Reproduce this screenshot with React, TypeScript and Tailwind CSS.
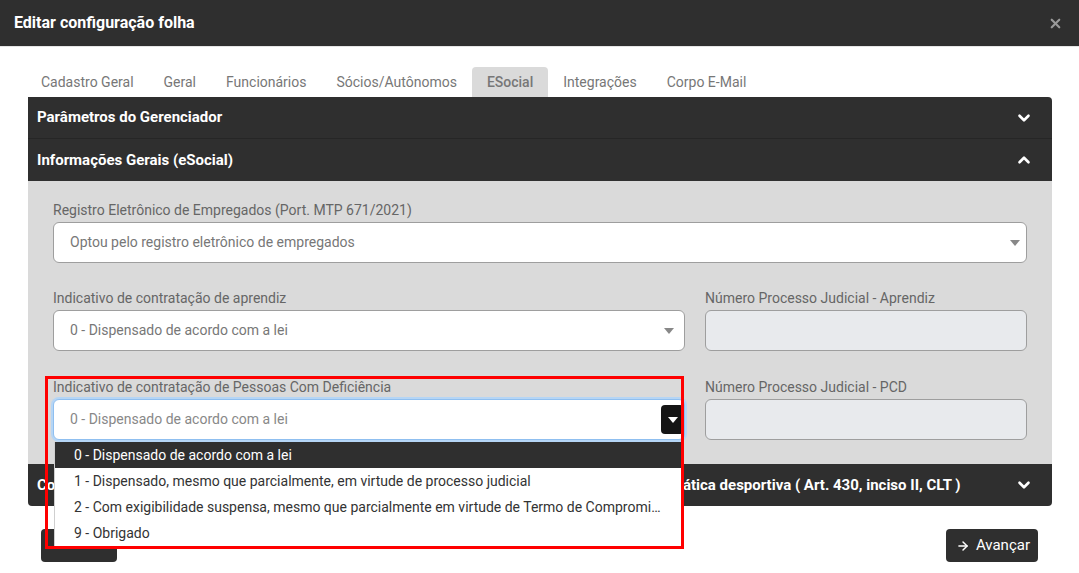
import React from 'react';
import { ChevronDown, ChevronUp, X, ArrowRight, ArrowLeft } from 'lucide-react';

const tabs = ['Cadastro Geral', 'Geral', 'Funcionários', 'Sócios/Autônomos', 'ESocial', 'Integrações', 'Corpo E-Mail'];

const options = [
  '0 - Dispensado de acordo com a lei',
  '1 - Dispensado, mesmo que parcialmente, em virtude de processo judicial',
  '2 - Com exigibilidade suspensa, mesmo que parcialmente em virtude de Termo de Compromisso de Ajustamento de Conduta',
  '9 - Obrigado',
];

const Caret = ({ className = '' }: { className?: string }) => (
  <svg viewBox="0 0 10 6" className={className} width="10" height="6">
    <path d="M0 0h10L5 6z" fill="currentColor" />
  </svg>
);

const App = () => {
  return (
    <div className="relative w-[1079px] h-[573px] bg-white overflow-hidden" style={{ fontFamily: 'Roboto, "Liberation Sans", sans-serif' }}>
      {/* Header */}
      <div className="h-[47px] bg-[#2f2f2f] flex items-center justify-between pl-[14px] pr-[16px] border-b border-[#e5e5e5]">
        <h1 className="text-white font-bold text-[16px]">Editar configuração folha</h1>
        <X className="w-[15px] h-[15px] text-[#9a9a9a]" strokeWidth={3.5} />
      </div>

      <div className="px-[28px] pt-[20px]">
        {/* Tabs */}
        <div className="flex h-[30px] -ml-[2px]">
          {tabs.map((t) => (
            <div
              key={t}
              className={`px-[15px] flex items-center text-[14px] rounded-t-[4px] ${
                t === 'ESocial' ? 'bg-[#dadada] text-[#777] font-medium' : 'text-[#777]'
              }`}
            >
              {t}
            </div>
          ))}
        </div>

        {/* Accordion */}
        <div className="w-[1024px] rounded-[4px]">
          <div className="h-[42px] bg-[#2f2f2f] rounded-tr-[4px] flex items-center justify-between px-[9px] border-b border-[#262626]">
            <span className="text-white font-bold text-[15px]">Parâmetros do Gerenciador</span>
            <ChevronDown className="w-[18px] h-[18px] text-white mr-[10px]" strokeWidth={3.5} />
          </div>
          <div className="h-[42px] bg-[#2f2f2f] flex items-center justify-between px-[9px]">
            <span className="text-white font-bold text-[15px]">Informações Gerais (eSocial)</span>
            <ChevronUp className="w-[18px] h-[18px] text-white mr-[10px]" strokeWidth={3.5} />
          </div>

          <div className="bg-[#dadada] px-[25px] pt-[20px] pb-[24px]">
            <label className="block text-[14px] text-[#666] mb-[3px] leading-[18px]">Registro Eletrônico de Empregados (Port. MTP 671/2021)</label>
            <div className="h-[41px] bg-white border border-[#9e9e9e] rounded-[6px] flex items-center justify-between pl-[16px] pr-[6px]">
              <span className="text-[14px] text-[#777]">Optou pelo registro eletrônico de empregados</span>
              <Caret className="text-[#888]" />
            </div>

            <div className="grid grid-cols-[632px_1fr] gap-x-[20px] mt-[26px]">
              <div>
                <label className="block text-[14px] text-[#666] mb-[3px] leading-[18px]">Indicativo de contratação de aprendiz</label>
                <div className="h-[41px] bg-white border border-[#9e9e9e] rounded-[6px] flex items-center justify-between pl-[16px] pr-[10px]">
                  <span className="text-[14px] text-[#777]">0 - Dispensado de acordo com a lei</span>
                  <Caret className="text-[#888]" />
                </div>
              </div>
              <div>
                <label className="block text-[14px] text-[#666] mb-[3px] leading-[18px]">Número Processo Judicial - Aprendiz</label>
                <div className="h-[41px] bg-[#e8eaed] border border-[#9e9e9e] rounded-[6px]" />
              </div>
            </div>

            <div className="grid grid-cols-[632px_1fr] gap-x-[20px] mt-[27px]">
              <div className="relative">
                <label className="block text-[14px] text-[#666] mb-[3px] leading-[18px]">Indicativo de contratação de Pessoas Com Deficiência</label>
                <div className="h-[41px] bg-white border border-[#8fbff0] ring-[2px] ring-[#b5d5f5] rounded-[6px] flex items-center justify-between pl-[16px] pr-0">
                  <span className="text-[14px] text-[#888]">0 - Dispensado de acordo com a lei</span>
                  <div className="w-[23px] h-[29px] bg-[#151515] rounded-[4px] flex items-center justify-center">
                    <Caret className="text-white" />
                  </div>
                </div>
                {/* Open list */}
                <ul className="absolute left-[1px] right-[2px] top-[64px] z-20 bg-white border-l border-[#cfcfcf] text-[14px]">
                  {options.map((o, i) => (
                    <li
                      key={o}
                      className={`h-[26px] flex items-center pl-[19px] pr-[22px] whitespace-nowrap overflow-hidden ${
                        i === 0 ? 'bg-[#2f2f2f] text-white' : 'text-[#333]'
                      }`}
                    >
                      <span className="truncate">{o}</span>
                    </li>
                  ))}
                </ul>
              </div>
              <div>
                <label className="block text-[14px] text-[#666] mb-[3px] leading-[18px]">Número Processo Judicial - PCD</label>
                <div className="h-[41px] bg-[#e8eaed] border border-[#9e9e9e] rounded-[6px]" />
              </div>
            </div>
          </div>

          <div className="h-[42px] bg-[#2f2f2f] rounded-b-[4px] flex items-center justify-between px-[9px]">
            <span className="text-white font-bold text-[15px] whitespace-nowrap">Contratação de aprendiz por intermédio de entidade social sem fins lucrativos ou entidade de prática desportiva ( Art. 430, inciso II, CLT )</span>
            <ChevronDown className="w-[18px] h-[18px] text-white mr-[10px] shrink-0" strokeWidth={3.5} />
          </div>
        </div>

        {/* Footer */}
        <div className="flex justify-between mt-[23px] pl-[13px] pr-[13px]">
          <button className="h-[33px] w-[76px] bg-[#2f2f2f] rounded-[4px] text-white text-[14px] leading-[16px] flex items-start justify-center pt-[3px] gap-[5px]">
            <ArrowLeft className="w-[13px] h-[13px] mt-[2px]" strokeWidth={2.5} />
            Voltar
          </button>
          <button className="h-[33px] pl-[10px] pr-[8px] bg-[#2f2f2f] rounded-[4px] text-white text-[15px] flex items-center gap-[6px]">
            <ArrowRight className="w-[14px] h-[14px]" strokeWidth={2.5} />
            Avançar
          </button>
        </div>
      </div>

      {/* Red annotation box */}
      <div className="absolute left-[45px] top-[376px] w-[639px] h-[173px] border-[3px] border-[#ff0000] z-30 pointer-events-none" />
    </div>
  );
};

export default App;
